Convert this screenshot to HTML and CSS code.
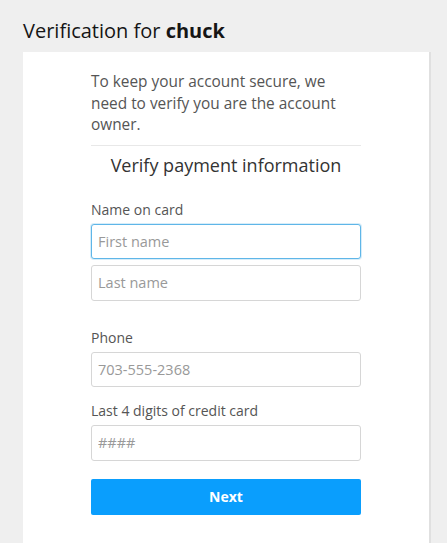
FILE: index.html
```html
<!DOCTYPE html>
<html>
<head>
<meta charset="utf-8">
<link rel="stylesheet" href="styles.css">
</head>
<body>
<div class="page">
  <h1 class="title">Verification for <b>chuck</b></h1>
  <div class="card">
    <div class="content">
      <p class="intro">To keep your account secure, we need to verify you are the account owner.</p>
      <h2 class="subtitle">Verify payment information</h2>
      <div class="group">
        <label class="label">Name on card</label>
        <input class="input focused" type="text" placeholder="First name">
        <input class="input" type="text" placeholder="Last name">
      </div>
      <div class="group phone">
        <label class="label">Phone</label>
        <input class="input" type="text" placeholder="703-555-2368">
      </div>
      <div class="group">
        <label class="label">Last 4 digits of credit card</label>
        <input class="input" type="text" placeholder="####">
      </div>
      <button class="btn">Next</button>
    </div>
  </div>
</div>
</body>
</html>
```
FILE: styles.css
```css
html, body {
  margin: 0;
  padding: 0;
  background: #efefef;
  font-family: "Open Sans", "Liberation Sans", sans-serif;
  height: 543px;
  overflow: hidden;
}
.page {
  padding: 18px 18px 0 23px;
}
.title {
  margin: 0 0 8px;
  font-size: 20px;
  font-weight: 400;
  color: #151515;
  line-height: 26px;
}
.title b {
  font-weight: 700;
}
.card {
  background: #fff;
  width: 406px;
  height: 491px;
  box-shadow: 2px 0 0 #e0e0e0;
  padding: 19px 0 0 68px;
  box-sizing: border-box;
}
.content {
  width: 270px;
}
.intro {
  margin: 0;
  font-size: 15.4px;
  line-height: 21.5px;
  color: #555;
  padding: 0 12px 9px 0;
  border-bottom: 1px solid #e8e8e8;
}
.subtitle {
  margin: 0;
  text-align: center;
  font-size: 18px;
  font-weight: 400;
  color: #333;
  line-height: 25px;
  padding: 7px 0 22px;
}
.group {
  display: flex;
  flex-direction: column;
  gap: 6px;
  margin-bottom: 14px;
}
.group.phone {
  margin-top: 27px;
}
.label {
  font-size: 14px;
  color: #555;
  line-height: 20px;
  margin-bottom: -2px;
}
.input {
  box-sizing: border-box;
  width: 270px;
  height: 35.5px;
  border: 1px solid #d6d6d6;
  border-radius: 3px;
  padding: 0 6px;
  font-family: "Open Sans", "Liberation Sans", sans-serif;
  font-size: 14.5px;
  color: #333;
  outline: none;
  background: #fff;
}
.input::placeholder {
  color: #999;
}
.input.focused {
  border-color: #5fb6e8;
  box-shadow: 0 0 0 1px rgba(95, 182, 232, 0.25);
}
.btn {
  display: block;
  width: 270px;
  height: 36px;
  margin-top: 18px;
  border: 0;
  border-radius: 2px;
  background: #0a9efd;
  color: #fff;
  font-family: "Open Sans", "Liberation Sans", sans-serif;
  font-size: 14px;
  font-weight: 700;
}
```
